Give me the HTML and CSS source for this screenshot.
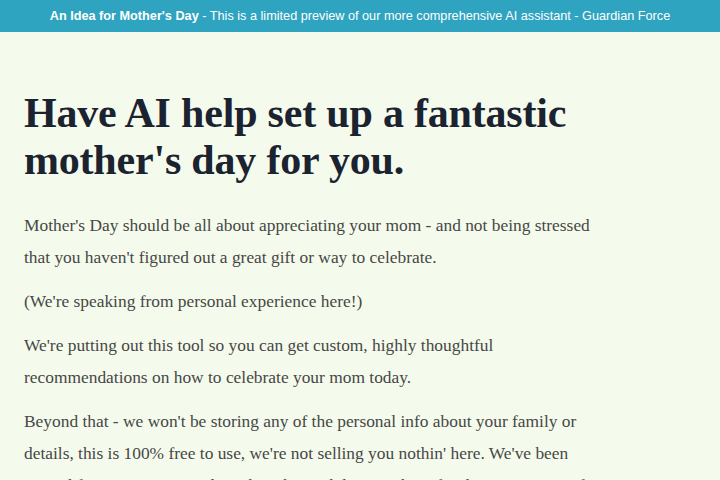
FILE: index.html
```html
<!DOCTYPE html>
<html lang="en">
<head>
<meta charset="utf-8">
<title>An Idea for Mother's Day</title>
<link rel="stylesheet" href="styles.css">
</head>
<body>
<div class="banner"><strong>An Idea for Mother's Day</strong> - This is a limited preview of our more comprehensive AI assistant - Guardian Force</div>
<main class="content">
<h1 class="title">Have AI help set up a fantastic mother's day for you.</h1>
<p class="text">Mother's Day should be all about appreciating your mom - and not being stressed that you haven't figured out a great gift or way to celebrate.</p>
<p class="text">(We're speaking from personal experience here!)</p>
<p class="text">We're putting out this tool so you can get custom, highly thoughtful recommendations on how to celebrate your mom today.</p>
<p class="text">Beyond that - we won't be storing any of the personal info about your family or details, this is 100% free to use, we're not selling you nothin' here. We've been around for 4 years now and we thought we'd do something for the community of fans of AI tools and moms everywhere.</p>
</main>
</body>
</html>
```
FILE: styles.css
```css
html, body {
  margin: 0;
  padding: 0;
}
body {
  background: #f5fbec;
  font-family: "Liberation Serif", "Times New Roman", serif;
}
.banner {
  background: #2fa4c0;
  color: #ffffff;
  font-family: "Liberation Sans", Arial, sans-serif;
  font-size: 12.7px;
  height: 32px;
  line-height: 32px;
  text-align: center;
  white-space: nowrap;
}
.content {
  padding: 58px 24px 0 24px;
}
.title {
  margin: 0 0 25px 0;
  font-size: 42px;
  line-height: 47px;
  font-weight: bold;
  color: #1b2230;
  max-width: 580px;
  letter-spacing: -0.2px;
}
.text {
  margin: 0 0 12px 0;
  max-width: 590px;
  font-size: 17.4px;
  line-height: 32px;
  color: #474747;
}
```
